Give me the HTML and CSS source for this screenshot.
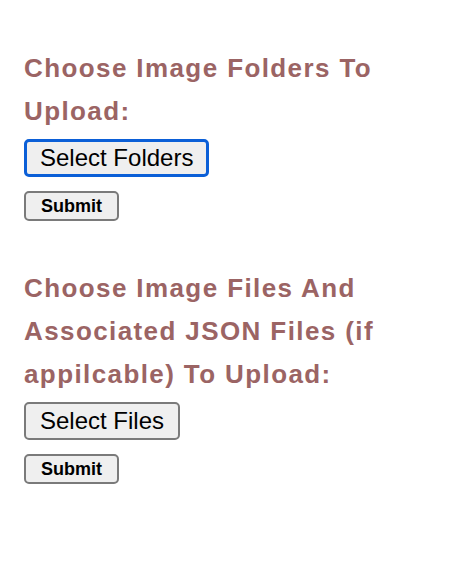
FILE: index.html
```html
<!DOCTYPE html>
<html lang="en">

<head>
    <meta charset="UTF-8">
    <meta name="viewport" content="width=device-width, initial-scale=1.0">
    <title>Upload Images</title>
    <link rel="stylesheet" href="styles.css">
</head>

<body>
    <main>
        <form class="upload-form">
            <h2>Choose Image Folders To Upload:</h2>
            <button type="button" class="pick-btn focused">Select Folders</button>
            <button type="submit" class="submit-btn">Submit</button>
        </form>

        <form class="upload-form">
            <h2>Choose Image Files And Associated JSON Files (if appilcable) To Upload:</h2>
            <button type="button" class="pick-btn">Select Files</button>
            <button type="submit" class="submit-btn">Submit</button>
        </form>
    </main>
</body>

</html>
```

FILE: styles.css
```css
* {
    box-sizing: border-box;
}

body {
    font-family: "Liberation Sans", Arial, sans-serif;
    margin: 0;
    padding: 0;
    background-color: white;
    color: black;
}

main {
    padding: 47px 24px 0;
}

.upload-form {
    display: flex;
    flex-direction: column;
    align-items: flex-start;
    margin-bottom: 46px;
}

h2 {
    font-size: 26px;
    font-weight: bold;
    line-height: 43px;
    letter-spacing: 1.4px;
    color: #9b6464;
    margin: 0 0 6px;
    max-width: 390px;
}

button {
    font-family: "Liberation Sans", Arial, sans-serif;
    color: black;
    background-color: #efefef;
    border: 2px solid #7a7a7a;
    border-radius: 5px;
    cursor: pointer;
}

.pick-btn {
    font-size: 24px;
    height: 38px;
    padding: 0 14px;
}

.pick-btn.focused {
    border: 3px solid #0b5fd7;
    padding: 0 13px;
}

.submit-btn {
    font-size: 18px;
    font-weight: bold;
    height: 30px;
    padding: 0 15px;
    margin-top: 14px;
}
```
